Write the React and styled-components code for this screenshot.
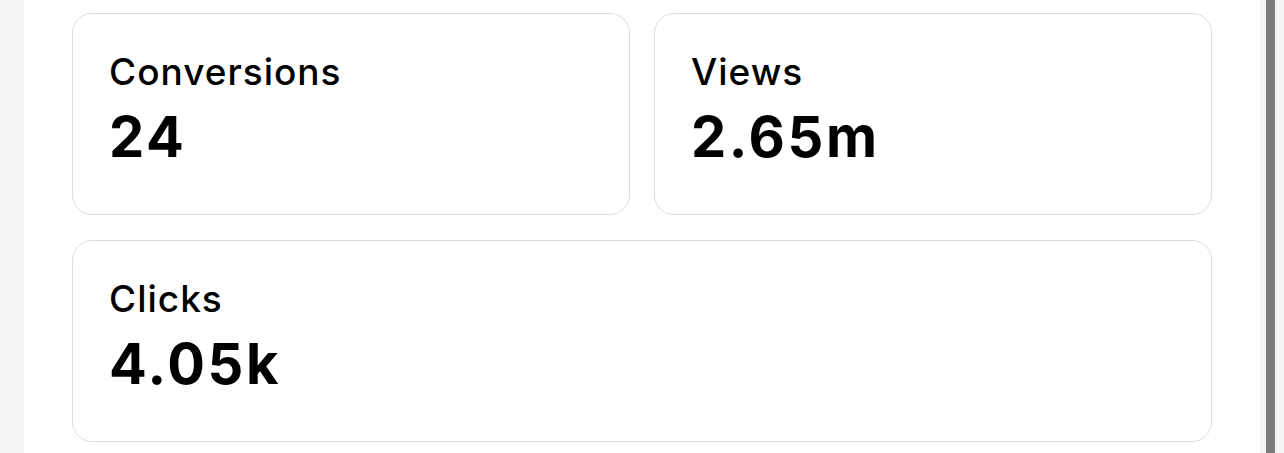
import React from 'react';
import styled, { createGlobalStyle } from 'styled-components';

const GlobalStyle = createGlobalStyle`
  html, body {
    margin: 0;
    padding: 0;
    background: #f5f5f5;
    font-family: Inter, "Noto Sans", sans-serif;
    color: #000;
  }
`;

const stats = [
  { id: 'conversions', label: 'Conversions', value: '24' },
  { id: 'views', label: 'Views', value: '2.65m' },
  { id: 'clicks', label: 'Clicks', value: '4.05k', wide: true },
];

const App = () => {
  return (
    <>
      <GlobalStyle />
      <Page>
        <Panel>
          <Grid>
            {stats.map((s) => (
              <Card key={s.id} $wide={s.wide}>
                <Label>{s.label}</Label>
                <Value>{s.value}</Value>
              </Card>
            ))}
          </Grid>
        </Panel>
        <Scrollbar>
          <Thumb />
        </Scrollbar>
      </Page>
    </>
  );
};

const Page = styled.div`
  display: flex;
  height: 453px;
  overflow: hidden;
  padding-left: 24px;
`;

const Panel = styled.div`
  flex: 1;
  background: #fff;
  padding: 13px 48px 0 48px;
`;

const Grid = styled.div`
  display: grid;
  grid-template-columns: 1fr 1fr;
  gap: 25px 24px;
`;

const Card = styled.div`
  grid-column: ${(p) => (p.$wide ? '1 / -1' : 'auto')};
  height: 202px;
  box-sizing: border-box;
  border: 1px solid #dcdcdc;
  border-radius: 20px;
  padding: 36px 36px;
  display: flex;
  flex-direction: column;
`;

const Label = styled.div`
  font-size: 37px;
  font-weight: 500;
  line-height: 44px;
  letter-spacing: 1px;
`;

const Value = styled.div`
  font-size: 56px;
  font-weight: 700;
  line-height: 64px;
  letter-spacing: 2.6px;
  margin-top: 11px;
`;

const Scrollbar = styled.div`
  width: 24px;
  background: #f4f4f4;
  display: flex;
  justify-content: center;
`;

const Thumb = styled.div`
  width: 9px;
  margin-left: -3px;
  height: 100%;
  background: #7b7b7b;
`;

export default App;
